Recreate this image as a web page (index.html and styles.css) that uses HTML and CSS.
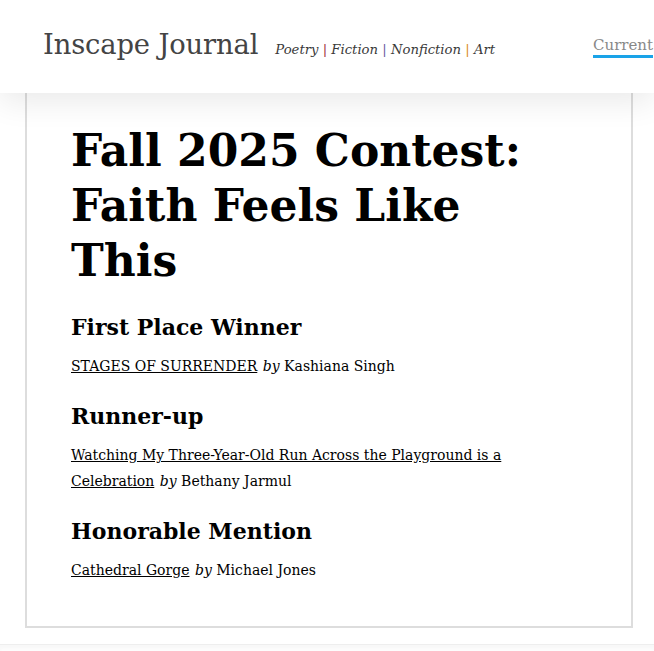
FILE: index.html
```html
<!DOCTYPE html>
<html lang="en">
<head>
<meta charset="utf-8">
<title>Fall 2025 Contest: Faith Feels Like This — Inscape Journal</title>
<link rel="stylesheet" href="styles.css">
</head>
<body>
<header class="site-header">
  <a class="logo" href="#">Inscape Journal</a>
  <p class="tagline"><span>Poetry</span> <span class="sep sep-red">|</span> <span>Fiction</span> <span class="sep sep-blue">|</span> <span>Nonfiction</span> <span class="sep sep-orange">|</span> <span>Art</span></p>
  <nav class="nav">
    <a class="nav-link active" href="#">Current</a>
  </nav>
</header>
<main class="card">
  <h1 class="title">Fall 2025 Contest: Faith Feels Like This</h1>
  <section class="award">
    <h2 class="award-title">First Place Winner</h2>
    <p class="entry"><a href="#">STAGES OF SURRENDER</a> <em>by</em> Kashiana Singh</p>
  </section>
  <section class="award">
    <h2 class="award-title">Runner-up</h2>
    <p class="entry"><a href="#">Watching My Three-Year-Old Run Across the Playground is a Celebration</a> <em>by</em> Bethany Jarmul</p>
  </section>
  <section class="award">
    <h2 class="award-title">Honorable Mention</h2>
    <p class="entry"><a href="#">Cathedral Gorge</a> <em>by</em> Michael Jones</p>
  </section>
</main>
<footer class="site-footer"></footer>
</body>
</html>
```
FILE: styles.css
```css
html, body {
  margin: 0;
  padding: 0;
  background: #fff;
  overflow-x: hidden;
}
body {
  font-family: "DejaVu Serif", "Liberation Serif", serif;
  color: #111;
}
.site-header {
  position: relative;
  z-index: 2;
  height: 93px;
  display: flex;
  align-items: baseline;
  padding: 29px 0 0 43px;
  box-sizing: border-box;
  background: #fff;
  box-shadow: 0 8px 30px rgba(0, 0, 0, 0.09);
  white-space: nowrap;
}
.logo {
  font-size: 27.4px;
  color: #444;
  text-decoration: none;
  letter-spacing: -0.15px;
}
.tagline {
  margin: 0 0 0 17px;
  font-style: italic;
  font-size: 13.2px;
  color: #3a3a3a;
}
.sep { font-style: normal; }
.sep-red { color: #9e2f3a; }
.sep-blue { color: #6a5a9e; }
.sep-orange { color: #d98a20; }
.nav {
  align-self: flex-start;
  margin: 7px 0 0 98px;
  display: flex;
}
.nav-link {
  font-size: 15px;
  line-height: 18px;
  color: #888;
  text-decoration: none;
  padding-bottom: 1px;
  border-bottom: 3px solid transparent;
}
.nav-link.active { border-bottom-color: #1aa3e8; }

.card {
  position: relative;
  z-index: 1;
  margin: 0 21px 0 25px;
  border: 2px solid #ddd;
  border-top: none;
  padding: 30px 60px 43px 44px;
}
.title {
  margin: 0;
  font-size: 44px;
  line-height: 55px;
  font-weight: bold;
  color: #000;
}
.award-title {
  margin: 22px 0 11px;
  font-size: 22px;
  line-height: 30px;
  font-weight: bold;
  color: #000;
}
.title + .award .award-title {
  margin-top: 24px;
}
.entry {
  margin: 0;
  font-size: 14px;
  line-height: 26px;
  color: #000;
}
.entry a { color: #000; }
.entry em { margin-left: 1px; }
.site-footer {
  margin-top: 16px;
  height: 10px;
  border-top: 1px solid #eee;
  box-shadow: inset 0 4px 4px rgba(0,0,0,0.03);
}
```
